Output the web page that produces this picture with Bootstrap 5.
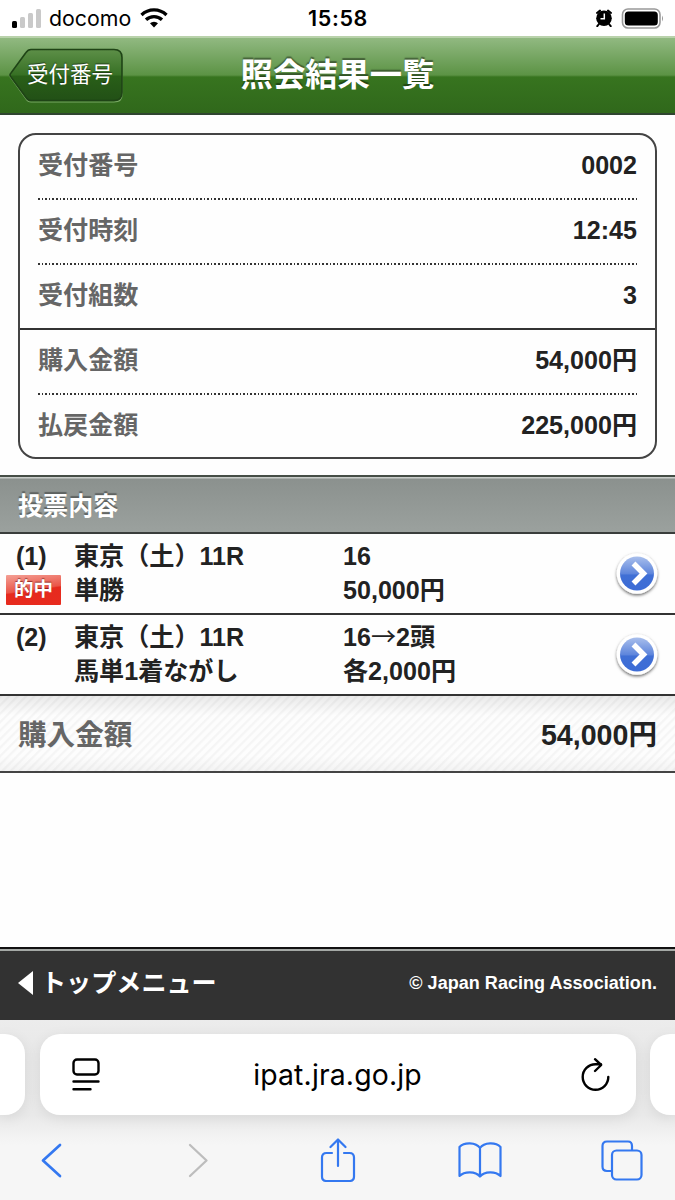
<!DOCTYPE html>
<html lang="ja">
<head>
<meta charset="utf-8">
<meta name="viewport" content="width=device-width, initial-scale=1">
<title>照会結果一覧</title>
<link href="https://cdn.jsdelivr.net/npm/bootstrap@5.3.0/dist/css/bootstrap.min.css" rel="stylesheet">
<style>
body{font-family:"Liberation Sans","Noto Sans CJK JP",sans-serif;font-weight:700;font-size:25.1px;line-height:34px;color:#222;background:#fefefe;height:1200px;overflow:hidden}
svg{display:block;flex:none}
.ui-font{font-family:Inter,"Noto Sans CJK JP",sans-serif;color:#000}
.status-bar{height:36px;background:#fff;display:grid;grid-template-columns:1fr auto 1fr;padding:0 10px 0 11px}
.status-bar .carrier{font-size:21.3px;font-weight:400;letter-spacing:0;margin-left:7px;margin-right:9px}
.status-bar .clock{font-size:21.5px;font-weight:600;letter-spacing:.6px}
.app-header{height:79px;border-top:2px solid #b9d2ab;border-bottom:2px solid #2f4530;background:linear-gradient(#91b981 0,#5c9345 37px,#37741f 39px,#30681b 100%);display:grid;grid-template-columns:1fr auto 1fr;padding:0 9px}
.app-header h1{font-size:32.3px;font-weight:700;line-height:74px;margin:0;color:#fff;text-shadow:0 -2px 1px rgba(0,0,0,.4)}
.back-btn{width:114px;height:55px;margin-top:10px;position:relative;color:#fff;font-size:21.5px;font-weight:400;line-height:55px;padding-left:18px;text-decoration:none}
.back-btn svg{position:absolute;inset:0}
.back-btn span{position:relative;text-shadow:0 -1px 1px rgba(0,0,0,.5)}
.info-panel{margin:18px 18px 0;border:2px solid #444;border-radius:18px;height:326px}
.info-row{height:65px;margin:0 18px;line-height:60px;position:relative}
.info-row.dotted::after{content:"";display:block;position:absolute;left:0;right:0;bottom:0;height:2px;background:repeating-linear-gradient(90deg,#333 0 1.6px,transparent 1.6px 3.6px)}
.info-group{height:195px;border-bottom:2px solid #333}
.muted{color:#666}
.section-head{margin-top:16px;height:59px;border-top:2px solid #454d46;border-bottom:2px solid #3a3d3c;background:linear-gradient(#c9cdca 0 1px,#8b918e 2px,#9ba19e 100%);color:#fff;padding-left:18px;line-height:58px;text-shadow:0 -2px 1px rgba(0,0,0,.35)}
.bet{height:81px;border-bottom:2px solid #333;padding-top:5px;display:grid;grid-template-columns:74px 269px 1fr 60px}
.bet .num{padding-left:16px;height:34px}
.hit{display:block;width:55px;height:30px;margin:2px 0 0 6px;border-radius:1px;font-size:19.5px;line-height:29px;text-align:center;color:#fff;background:linear-gradient(172deg,#f4a095 0,#ea5548 48%,#e62a1e 52%,#e82b1e 100%);text-shadow:0 -1px 1px rgba(90,0,0,.6)}
.arrow-r{font-family:"Noto Sans CJK JP",sans-serif;font-weight:400;line-height:1}
.bet .go{margin:9px 0 0 -4px}
.total{height:77px;border-bottom:2px solid #444;padding:0 18px;font-size:28.6px;line-height:78px;background:linear-gradient(rgba(0,0,0,.08),transparent 20px,transparent 60px,rgba(0,0,0,.04)),repeating-linear-gradient(135deg,#f5f5f5 0 1px,#fdfdfd 2.5px 5px,#f5f5f5 6px)}
.app-footer{margin-top:174px;height:73px;border-top:2px solid #111;background:linear-gradient(#a5a9a6 0 2px,#323232 2px);color:#fff;padding:0 18px 3px}
.app-footer .copy{font-size:18px;letter-spacing:.04px}
.browser{height:180px;background:linear-gradient(#ececec 0,#e8e8e8 35px,#e9e9e9 95px,#f6f6f6 125px);overflow:hidden}
.tabs{margin-top:14px;height:81px;display:grid;grid-template-columns:25px 596px 25px;column-gap:14.5px}
.tab-pane-card{background:#fff;border-radius:20px;box-shadow:0 3px 14px rgba(0,0,0,.08)}
.tab-l{border-radius:0 20px 20px 0}.tab-r{border-radius:20px 0 0 20px}
.url{font-size:28.4px;font-weight:400;letter-spacing:.15px;margin-right:5px}
.tools{height:85px;padding:5px 0 0 40px;display:grid;grid-template-columns:146px 133.5px 138px 143.5px 42px}
</style>
</head>
<body>
<div class="status-bar ui-font">
  <div class="d-flex align-items-center">
    <svg width="31" height="20" viewBox="0 0 31 20"><rect x="1" y="13" width="5" height="7" rx="1.5"/><g fill="#c9c9c9"><rect x="9" y="9" width="5" height="11" rx="1.5"/><rect x="17" y="5" width="5" height="15" rx="1.5"/><rect x="25" y="1" width="5" height="19" rx="1.5"/></g></svg>
    <span class="carrier">docomo</span>
    <svg width="28" height="20" viewBox="0 0 28 20"><path d="M14 19.5l-4-4.2a5.8 5.8 0 0 1 8 0z"/><g fill="none" stroke="#000" stroke-width="3.3"><path d="M6 11.8a11.5 11.5 0 0 1 16 0M1.5 7a18 18 0 0 1 25 0"/></g></svg>
  </div>
  <div class="clock align-self-center">15:58</div>
  <div class="d-flex align-items-center justify-content-end gap-2">
    <svg width="18" height="18" viewBox="0 0 18 18"><circle cx="9" cy="9.3" r="7.8"/><path d="M2 4l3-2.4M16 4l-3-2.4M4 15l-1.7 2.2M14 15l1.7 2.2" stroke="#000" stroke-width="2" stroke-linecap="round"/><path d="M9.3 4.5v5.3H5.5" stroke="#fff" stroke-width="1.5" fill="none"/></svg>
    <svg width="44" height="21" viewBox="0 0 44 21"><rect x="1.500" y="1" width="37.5" height="19" rx="5.5" fill="none" stroke="#999" stroke-width="1.6"/><rect x="3.8" y="3.4" width="33" height="14.2" rx="3.5"/><path d="M41 7.5q2 3 0 6z" fill="#999"/></svg>
  </div>
</div>
<header class="app-header">
  <a class="back-btn" href="#"><svg width="114" height="55" viewBox="0 0 114 55"><defs><linearGradient id="bk" x1="0" y1="0" x2="0" y2="1"><stop offset="0" stop-color="#5d8f48"/><stop offset=".5" stop-color="#377024"/><stop offset=".52" stop-color="#295f18"/><stop offset="1" stop-color="#225016"/></linearGradient></defs><path d="M22 3h83q8 0 8 8v36q0 7-8 7H22q-3 0-5-3L2 30q-2-2 0-4L17 6q2-3 5-3z" fill="none" stroke="#79a865" stroke-width="1.2"/><path d="M22 1.500h83q8 0 8 8v35q0 8-8 8H22q-3 0-5-3L2 29q-2-2 0-4L17 4.500q2-3 5-3z" fill="url(#bk)" stroke="#1f4416" stroke-width="1.6"/></svg><span>受付番号</span></a>
  <h1>照会結果一覧</h1>
</header>
<main>
  <section class="info-panel">
    <div class="info-group">
      <div class="info-row dotted d-flex justify-content-between"><span class="muted">受付番号</span><span>0002</span></div>
      <div class="info-row dotted d-flex justify-content-between"><span class="muted">受付時刻</span><span>12:45</span></div>
      <div class="info-row d-flex justify-content-between"><span class="muted">受付組数</span><span>3</span></div>
    </div>
    <div class="info-row dotted d-flex justify-content-between"><span class="muted">購入金額</span><span>54,000円</span></div>
    <div class="info-row d-flex justify-content-between"><span class="muted">払戻金額</span><span>225,000円</span></div>
  </section>
  <div class="section-head">投票内容</div>
  <div class="bet">
    <div><div class="num">(1)</div><span class="hit">的中</span></div>
    <div>東京（土）11R<br>単勝</div>
    <div>16<br>50,000円</div>
    <svg class="go" width="52" height="52" viewBox="0 0 52 52"><defs><linearGradient id="bl" x1="0" y1="0" x2="0" y2="1"><stop offset="0" stop-color="#a9bfec"/><stop offset=".5" stop-color="#5f86dc"/><stop offset=".55" stop-color="#406fd5"/><stop offset="1" stop-color="#3c6cd6"/></linearGradient><filter id="sh" x="-30%" y="-30%" width="160%" height="160%"><feDropShadow dx="0" dy="1.500" stdDeviation="1.500" flood-opacity=".6"/></filter></defs><circle cx="26" cy="25.500" r="20.300" fill="#fff" filter="url(#sh)"/><circle cx="26" cy="25.500" r="17" fill="url(#bl)"/><path d="M22.500 15.500L32.500 25.500l-10 10" fill="none" stroke="#fff" stroke-width="5.500"/></svg>
  </div>
  <div class="bet">
    <div><div class="num">(2)</div></div>
    <div>東京（土）11R<br>馬単1着ながし</div>
    <div>16<span class="arrow-r">→</span>2頭<br>各2,000円</div>
    <svg class="go" width="52" height="52" viewBox="0 0 52 52"><circle cx="26" cy="25.500" r="20.300" fill="#fff" filter="url(#sh)"/><circle cx="26" cy="25.500" r="17" fill="url(#bl)"/><path d="M22.500 15.500L32.500 25.500l-10 10" fill="none" stroke="#fff" stroke-width="5.500"/></svg>
  </div>
  <div class="total d-flex justify-content-between"><span class="muted">購入金額</span><span>54,000円</span></div>
</main>
<footer class="app-footer d-flex justify-content-between align-items-center">
  <div class="d-flex align-items-center"><svg width="15" height="24" viewBox="0 0 15 24"><path d="M15 0v24L0 12z" fill="#fff"/></svg><span class="ms-2 ps-0">トップメニュー</span></div>
  <span class="copy">© Japan Racing Association.</span>
</footer>
<div class="browser ui-font">
  <div class="tabs">
    <div class="tab-pane-card tab-l"></div>
    <div class="tab-pane-card d-flex align-items-center justify-content-between px-4">
      <svg class="ms-2" width="28" height="33" viewBox="0 0 28 33" fill="none" stroke="#000" stroke-width="2.400" stroke-linecap="round"><rect x="1.500" y="1.500" width="25" height="15" rx="3.500"/><path d="M1.500 23.500h25M1.500 31.300h17"/></svg>
      <span class="url">ipat.jra.go.jp</span>
      <svg width="31" height="36" viewBox="0 0 31 36" fill="none" stroke="#000" stroke-width="2.400" stroke-linecap="round" stroke-linejoin="round"><path d="M28.300 20a12.800 12.800 0 1 1-12.800-12.800h5.500M15 2.200l6.200 5.800L15 14"/></svg>
    </div>
    <div class="tab-pane-card tab-r"></div>
  </div>
  <div class="tools align-items-center">
    <svg width="24" height="36" viewBox="0 0 24 36" fill="none" stroke="#3478f0" stroke-width="2.700" stroke-linecap="round" stroke-linejoin="round"><path d="M20 3L3 18.500 20 34"/></svg>
    <svg width="24" height="36" viewBox="0 0 24 36" fill="none" stroke="#bdbdbd" stroke-width="2.300" stroke-linecap="round" stroke-linejoin="round"><path d="M4 3l16.500 15.500L4 34"/></svg>
    <svg width="36" height="44" viewBox="0 0 36 44" fill="none" stroke="#3478f0" stroke-width="2.200" stroke-linecap="round" stroke-linejoin="round"><path d="M12 15H6.500Q2 15 2 19.500v19Q2 43 6.500 43h23q4.500 0 4.500-4.500v-19Q34 15 29.500 15H24M18 28V2M10.500 9L18 1.500 25.500 9"/></svg>
    <svg width="44" height="38" viewBox="0 0 44 38" fill="none" stroke="#3478f0" stroke-width="2.200" stroke-linejoin="round"><path d="M22 7v28.500M22 7C18 1 6 1 1.500 6v29c5-5 16-5 20.500.5C26.500 30 37.500 30 42.500 35V6C38 1 26 1 22 7z"/></svg>
    <svg width="42" height="41" viewBox="0 0 42 41" fill="none" stroke="#3478f0" stroke-width="2.200"><path d="M11 31H6q-4.500 0-4.500-4.500V6Q1.500 1.500 6 1.500h21Q31 1.500 31 6v4.500"/><rect x="11" y="10.500" width="29.500" height="29" rx="4.500"/></svg>
  </div>
</div>
<script src="https://cdn.jsdelivr.net/npm/bootstrap@5.3.0/dist/js/bootstrap.bundle.min.js"></script>
</body>
</html>
